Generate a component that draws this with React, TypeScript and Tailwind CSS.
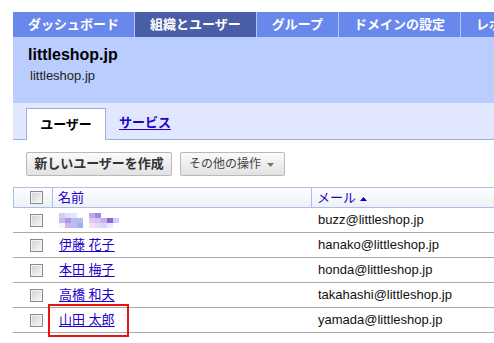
import React from "react";

const font = "font-['Liberation_Sans','Noto_Sans_CJK_JP',sans-serif]";

function Checkbox() {
  return (
    <span className="block w-[13px] h-[13px] border border-[#8a8a8a] bg-gradient-to-br from-[#cfcfcf] to-[#fbfbfb] shadow-[inset_0_0_0_1px_#f4f4f4]" />
  );
}

const mosaic: [number, number, string][] = [
  [0, 0, "#d8ccf4"], [6, 0, "#e4dcfa"], [12, 0, "#dde6ff"],
  [0, 5, "#c8b8f0"], [6, 5, "#a898e8"], [12, 5, "#c0b8f0"], [18, 5, "#b0c0f4"],
  [0, 10, "#fff0f8"], [6, 10, "#c8b8f0"], [12, 10, "#c0b8f0"], [18, 10, "#a0b0f0"],
  [30, 0, "#c0a8ec"], [36, 0, "#a088e0"],
  [30, 5, "#e0c8f0"], [36, 5, "#d8c0f0"], [42, 5, "#c0b0ec"], [48, 5, "#8866d8"], [54, 5, "#c8d0fc"],
  [30, 10, "#f0e0f8"], [36, 10, "#e8d8fa"], [42, 10, "#d0d8fc"], [48, 10, "#f0e8fc"],
];

function Mosaic() {
  return (
    <svg width="60" height="15" viewBox="0 0 60 15" className="block">
      {mosaic.map(([x, y, c], i) => (
        <rect key={i} x={x} y={y} width="6" height="5" fill={c} />
      ))}
    </svg>
  );
}

const users = [
  { name: null, mail: "buzz@littleshop.jp" },
  { name: "伊藤 花子", mail: "hanako@littleshop.jp" },
  { name: "本田 梅子", mail: "honda@littleshop.jp" },
  { name: "高橋 和夫", mail: "takahashi@littleshop.jp" },
  { name: "山田 太郎", mail: "yamada@littleshop.jp" },
];

export default function App() {
  const navTab = "px-[15px] flex items-center text-[13px] font-bold text-white";
  return (
    <div className={`relative w-[494px] h-[343px] overflow-hidden bg-white pt-[12px] pl-[13px] ${font}`}>
      <nav className="flex h-[25px] whitespace-nowrap w-[600px]">
        <div className={`${navTab} bg-[#6888ec]`}>ダッシュボード</div>
        <div className="w-px bg-[#b4c4f6]" />
        <div className={`${navTab} bg-[#4a5ea8]`}>組織とユーザー</div>
        <div className="w-px bg-[#b4c4f6]" />
        <div className={`${navTab} bg-[#6888ec]`}>グループ</div>
        <div className="w-px bg-[#b4c4f6]" />
        <div className={`${navTab} bg-[#6888ec]`}>ドメインの設定</div>
        <div className="w-px bg-[#b4c4f6]" />
        <div className={`${navTab} bg-[#6888ec]`}>レポート</div>
      </nav>

      <div className="bg-[#bbccff] h-[66px] pl-[15px] pt-[9px]">
        <div className="text-[16px] leading-[18px] font-bold text-black">littleshop.jp</div>
        <div className="mt-[4px] ml-[2px] text-[13px] leading-[16px] text-[#222]">littleshop.jp</div>
      </div>

      <div className="flex items-end h-[37px] bg-[#e0e7ff] border-b border-[#9aaddd]">
        <div className="ml-[13px] -mb-px w-[80px] h-[32px] bg-white border border-b-0 border-[#9aaddd] flex items-center justify-center text-[13px] font-bold text-black">
          ユーザー
        </div>
        <div className="ml-[13px] h-[32px] flex items-center text-[13px] font-bold text-[#2200cc] underline underline-offset-2">
          サービス
        </div>
      </div>

      <div className="flex gap-[8px] pl-[13px] mt-[12px]">
        <div className="w-[146px] h-[24px] flex items-center justify-center rounded-[2px] border border-[#b8b8b8] bg-gradient-to-b from-[#fbfbfb] to-[#e2e2e2] text-[13px] font-bold text-[#333]">
          新しいユーザーを作成
        </div>
        <div className="w-[105px] h-[24px] flex items-center pl-[8px] rounded-[2px] border border-[#b8b8b8] bg-gradient-to-b from-[#fbfbfb] to-[#e2e2e2] text-[12px] text-[#444]">
          その他の操作
          <svg width="7" height="4" viewBox="0 0 7 4" className="ml-[6px] mt-[2px]">
            <polygon points="0,0 7,0 3.5,4" fill="#777" />
          </svg>
        </div>
      </div>

      <div className="mt-[11px] w-[600px]">
        <div className="flex h-[21px] border-t border-b border-l border-[#aabbee] bg-gradient-to-b from-white to-[#eef0f5] text-[13px]">
          <div className="w-[39px] flex items-center pl-[16px] border-r border-[#aabbee]">
            <Checkbox />
          </div>
          <div className="w-[259px] flex items-center pl-[5px] border-r border-[#aabbee] text-[#2200cc]">名前</div>
          <div className="flex items-center pl-[5px] text-[#2200cc]">
            メール
            <svg width="7" height="4" viewBox="0 0 7 4" className="ml-[4px] mt-[3px]">
              <polygon points="0,4 7,4 3.5,0" fill="#0000cc" />
            </svg>
          </div>
        </div>
        {users.map((u, i) => (
          <div key={i} className="flex h-[25px] border-b border-[#aaaaaa] text-[13px]">
            <div className="w-[40px] flex items-center pl-[17px]">
              <Checkbox />
            </div>
            <div className="w-[259px] flex items-center pl-[6px]">
              {u.name ? (
                <span className="text-[#2200cc] underline underline-offset-2">{u.name}</span>
              ) : (
                <Mosaic />
              )}
            </div>
            <div className="flex items-center pl-[6px] text-[#111]">{u.mail}</div>
          </div>
        ))}
      </div>

      <div className="absolute left-[48px] top-[304px] w-[81px] h-[33px] border-2 border-[#ee1111]" />
    </div>
  );
}
